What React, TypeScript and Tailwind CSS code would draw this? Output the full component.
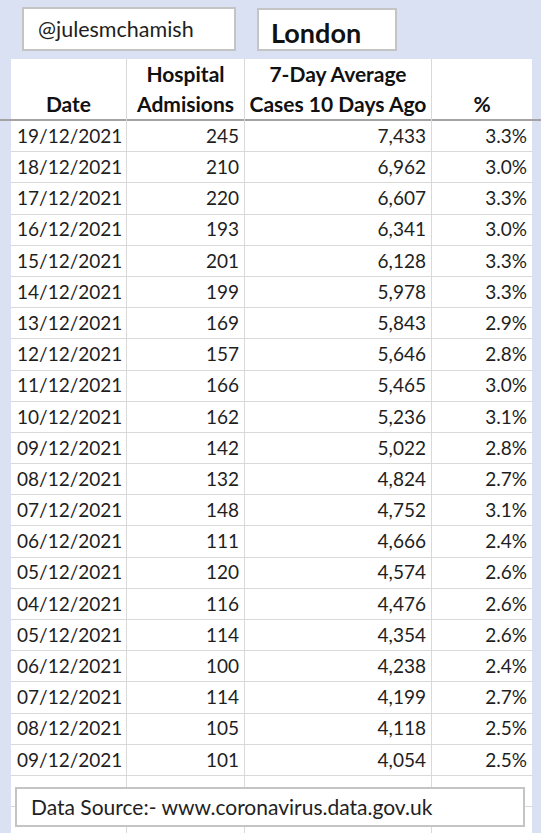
const rows: [string, string, string, string][] = [
  ["19/12/2021", "245", "7,433", "3.3%"],
  ["18/12/2021", "210", "6,962", "3.0%"],
  ["17/12/2021", "220", "6,607", "3.3%"],
  ["16/12/2021", "193", "6,341", "3.0%"],
  ["15/12/2021", "201", "6,128", "3.3%"],
  ["14/12/2021", "199", "5,978", "3.3%"],
  ["13/12/2021", "169", "5,843", "2.9%"],
  ["12/12/2021", "157", "5,646", "2.8%"],
  ["11/12/2021", "166", "5,465", "3.0%"],
  ["10/12/2021", "162", "5,236", "3.1%"],
  ["09/12/2021", "142", "5,022", "2.8%"],
  ["08/12/2021", "132", "4,824", "2.7%"],
  ["07/12/2021", "148", "4,752", "3.1%"],
  ["06/12/2021", "111", "4,666", "2.4%"],
  ["05/12/2021", "120", "4,574", "2.6%"],
  ["04/12/2021", "116", "4,476", "2.6%"],
  ["05/12/2021", "114", "4,354", "2.6%"],
  ["06/12/2021", "100", "4,238", "2.4%"],
  ["07/12/2021", "114", "4,199", "2.7%"],
  ["08/12/2021", "105", "4,118", "2.5%"],
  ["09/12/2021", "101", "4,054", "2.5%"],
];

const gridCols = "grid grid-cols-[116px_118px_187px_100px]";

function Row({ cells }: { cells: string[] }) {
  return (
    <div className={`${gridCols} h-[31.2px] border-b border-[#d9d9d9]`}>
      <div className="border-r border-[#d9d9d9] pl-[6px] flex items-center">{cells[0]}</div>
      <div className="border-r border-[#d9d9d9] pr-[5px] flex items-center justify-end">{cells[1]}</div>
      <div className="border-r border-[#d9d9d9] pr-[5px] flex items-center justify-end">{cells[2]}</div>
      <div className="pr-[5px] flex items-center justify-end">{cells[3]}</div>
    </div>
  );
}

export default function App() {
  return (
    <div className="relative w-[541px] h-[833px] overflow-hidden bg-[#dae1f3] text-[#1e1e1e] text-[19px] [font-family:Lato,'Open_Sans',sans-serif]">
      {/* title boxes */}
      <div className="flex items-start h-[59px] pt-[7px] pl-[22px] gap-[21px]">
        <div className="w-[214px] h-[44px] bg-white border-2 border-[#c4c4c4] flex items-center pl-[14px] text-[21.5px]">
          @julesmchamish
        </div>
        <div className="w-[140px] h-[43px] mt-[1px] bg-white border-2 border-[#c4c4c4] pl-[12px] pt-[7px] text-[27px] font-bold leading-[32px] text-[#111]">
          London
        </div>
      </div>

      {/* header */}
      <div className={`${gridCols} ml-[11px] w-[521px] h-[60px] bg-white font-bold text-[#111] text-[21px]`}>
        <div className="border-r border-[#d9d9d9] flex items-end justify-center pb-[2px] leading-[30px]">Date</div>
        <div className="border-r border-[#d9d9d9] flex flex-col items-center justify-end pb-[2px] leading-[30px]">
          <span>Hospital</span>
          <span>Admisions</span>
        </div>
        <div className="border-r border-[#d9d9d9] flex flex-col items-center justify-end pb-[2px] leading-[30px]">
          <span>7-Day Average</span>
          <span>Cases 10 Days Ago</span>
        </div>
        <div className="flex items-end justify-center pb-[2px] leading-[30px]">%</div>
      </div>
      <div className="h-[2px] bg-[#a3a3a3]" />

      {/* data */}
      <div className="ml-[11px] w-[521px] bg-white">
        {rows.map((r, i) => (
          <Row key={i} cells={r} />
        ))}
        <Row cells={["", "", "", ""]} />
        <Row cells={["", "", "", ""]} />
      </div>

      {/* source note */}
      <div className="absolute left-[15px] top-[787px] w-[510px] h-[40px] bg-white border-2 border-[#c4c4c4] flex items-center pl-[14px] text-[21px] text-[#222]">
        Data Source:- www.coronavirus.data.gov.uk
      </div>
    </div>
  );
}
